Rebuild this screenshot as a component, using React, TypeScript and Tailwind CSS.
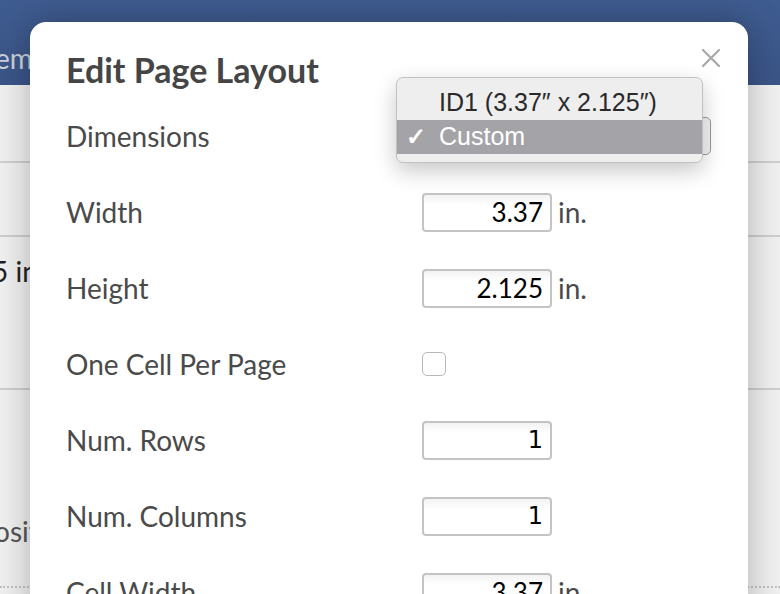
import React from 'react';

const rows: { label: string; kind: 'input' | 'check'; value?: string; unit?: boolean; mono?: boolean }[] = [
  { label: 'Width', kind: 'input', value: '3.37', unit: true },
  { label: 'Height', kind: 'input', value: '2.125', unit: true },
  { label: 'One Cell Per Page', kind: 'check' },
  { label: 'Num. Rows', kind: 'input', value: '1', mono: true },
  { label: 'Num. Columns', kind: 'input', value: '1', mono: true },
  { label: 'Cell Width', kind: 'input', value: '3.37', unit: true },
];

function Background() {
  return (
    <div className="flex flex-col w-full h-full bg-[#f1f1f1]">
      <div className="h-[85px] shrink-0 bg-gradient-to-b from-[#3f5c91] to-[#3a5587] flex items-end pb-[6px]">
        <span className="ml-[-5px] text-[28px] text-[#cdd2dc]">emm</span>
      </div>
      <div className="h-[78px] shrink-0 border-b-2 border-[#cfcfcf]" />
      <div className="h-[74px] shrink-0 border-b-2 border-[#cfcfcf]" />
      <div className="h-[153px] shrink-0 border-b-2 border-[#cfcfcf] pt-[13px]">
        <span className="ml-[-8px] text-[28px] text-[#222]">5 in.</span>
      </div>
      <div className="h-[198px] shrink-0 border-b-2 border-dotted border-[#c4c4c4] flex items-end pb-[34px]">
        <span className="ml-[-6px] text-[28px] text-[#555]">osit</span>
      </div>
    </div>
  );
}

function CloseIcon() {
  return (
    <svg width="20" height="20" viewBox="0 0 20 20" className="block">
      <path d="M2 2 L18 18 M18 2 L2 18" stroke="#a8a8a8" strokeWidth="2.2" strokeLinecap="round" />
    </svg>
  );
}

function Dropdown() {
  return (
    <div className="absolute left-[366px] top-[55px] w-[307px] h-[86px] rounded-[7px] bg-[#eeeeee] border border-[#c2c2c2] shadow-[0_8px_22px_rgba(0,0,0,0.22)] py-[8px] font-['Liberation_Sans',Roboto,sans-serif] text-[25px]">
      <div className="h-[34px] flex items-center pl-[42px] text-[#2a2a2a]">ID1 (3.37″ x 2.125″)</div>
      <div className="h-[34px] flex items-center bg-[#a4a4a8] text-white">
        <span className="w-[42px] pl-[9px] text-[24px] font-bold">✓</span>
        <span>Custom</span>
      </div>
    </div>
  );
}

export default function App() {
  return (
    <div className="relative w-[780px] h-[594px] overflow-hidden font-['Lato',sans-serif]">
      <Background />

      {/* Modal */}
      <div className="absolute left-[30px] top-[22px] w-[718px] h-[640px] rounded-[16px] bg-white shadow-[0_0_36px_rgba(0,0,0,0.28)] pl-[36px] pt-[30px]">
        <button className="absolute left-[671px] top-[26px]">
          <CloseIcon />
        </button>

        <h1 className="text-[34px] leading-[36px] font-bold text-[#454545] mb-[10px]">Edit Page Layout</h1>

        <div className="grid grid-cols-[356px_1fr] auto-rows-[76px] items-center text-[28px] text-[#4a4a4a]">
          <div>Dimensions</div>
          <div>
            <div className="w-[289px] h-[38px] rounded-[5px] border border-[#9a9a9a] bg-[#f4f4f4]" />
          </div>

          {rows.map((row) => (
            <React.Fragment key={row.label}>
              <div>{row.label}</div>
              <div className="flex items-center">
                {row.kind === 'check' ? (
                  <div className="w-[24px] h-[24px] rounded-[5px] border border-[#b9b9b9] bg-white" />
                ) : (
                  <>
                    <div
                      className={`w-[130px] h-[39px] rounded-[4px] border-2 border-[#c4c4c4] bg-gradient-to-b from-[#f3f3f3] to-white to-[30%] flex items-center justify-end pr-[7px] text-black ${
                        row.mono ? "font-['DejaVu_Sans',sans-serif] text-[24px]" : 'text-[26px]'
                      }`}
                    >
                      {row.value}
                    </div>
                    {row.unit && <span className="ml-[6px]">in.</span>}
                  </>
                )}
              </div>
            </React.Fragment>
          ))}
        </div>

        <Dropdown />
      </div>
    </div>
  );
}
